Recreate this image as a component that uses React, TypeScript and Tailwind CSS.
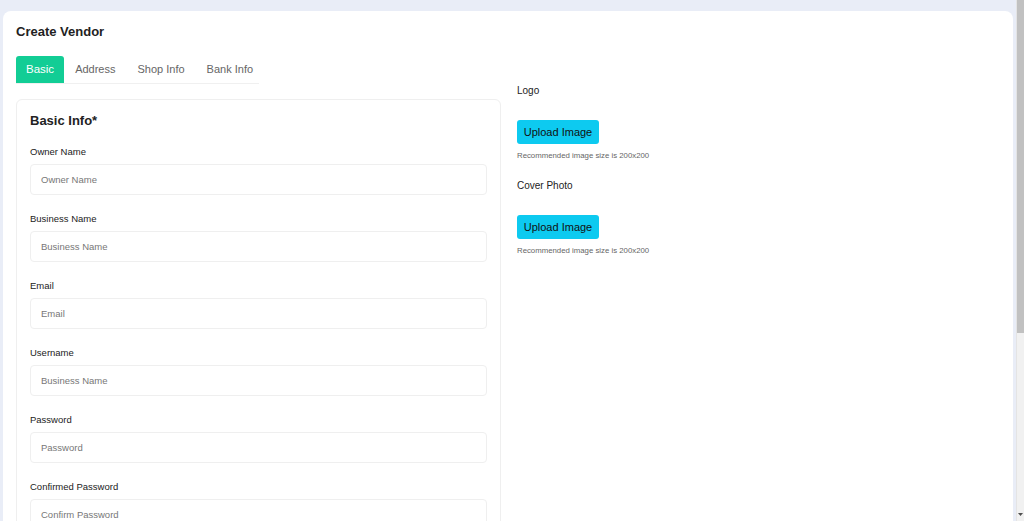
import * as React from "react";

const fields = [
  { label: "Owner Name", placeholder: "Owner Name" },
  { label: "Business Name", placeholder: "Business Name" },
  { label: "Email", placeholder: "Email" },
  { label: "Username", placeholder: "Business Name" },
  { label: "Password", placeholder: "Password" },
  { label: "Confirmed Password", placeholder: "Confirm Password" },
  { label: "Phone", placeholder: "Phone" },
];

const tabs = ["Basic", "Address", "Shop Info", "Bank Info"];

function ImageField({ label }: { label: string }) {
  return (
    <div className="flex flex-col">
      <span className="text-[10px] leading-[14px] text-[#222]">{label}</span>
      <button
        type="button"
        className="mt-[22px] h-6 w-[82px] whitespace-nowrap rounded-[3px] bg-[#0dcaf0] text-[11px] text-[#111]"
      >
        Upload Image
      </button>
      <span className="mt-[7px] whitespace-nowrap text-[7.8px] leading-[10px] text-[#666]">
        Recommended image size is 200x200
      </span>
    </div>
  );
}

export default function App() {
  const [active, setActive] = React.useState("Basic");

  return (
    <div
      className="flex h-[521px] overflow-hidden bg-[#e9edf7]"
      style={{ fontFamily: '"Liberation Sans", Arial, sans-serif' }}
    >
      <div className="min-w-0 flex-1">
        <div className="mx-[3px] mt-[11px] rounded-lg bg-white px-[13px] pb-8 pt-[13px]">
          <h1 className="text-[13px] font-bold leading-4 text-[#222]">Create Vendor</h1>

          <div className="mt-[16px] flex w-[243px] border-b border-[#f0f0f0]">
            {tabs.map((t) => (
              <button
                key={t}
                type="button"
                onClick={() => setActive(t)}
                className={
                  t === active
                    ? "h-[27px] whitespace-nowrap rounded-t-[3px] bg-[#12cd95] px-[10px] text-[11.5px] text-white"
                    : "h-[27px] whitespace-nowrap px-[11px] text-[11px] text-[#666]"
                }
              >
                {t}
              </button>
            ))}
          </div>

          <div className="mt-[15px] grid grid-cols-2 gap-4">
            <div className="mr-[-1px] rounded-md border border-[#efefef] px-[13px] pb-6 pt-[12px]">
              <h2 className="text-[13px] font-bold leading-[18px] text-[#222]">Basic Info*</h2>
              <div className="mt-[15px] flex flex-col gap-[17px]">
                {fields.map((f) => (
                  <label key={f.label} className="flex flex-col">
                    <span className="text-[9.5px] leading-[14px] text-[#222]">{f.label}</span>
                    <input
                      placeholder={f.placeholder}
                      className="mt-[5px] h-[31px] rounded-[4px] border border-[#efefef] px-[10px] text-[9.5px] outline-none placeholder:text-[#777]"
                    />
                  </label>
                ))}
              </div>
            </div>

            <div className="-mt-[15px] flex flex-col gap-[18px] pl-px">
              <ImageField label="Logo" />
              <ImageField label="Cover Photo" />
            </div>
          </div>
        </div>
      </div>

      {/* page scrollbar */}
      <div className="flex w-[8px] shrink-0 flex-col border-l border-[#e4e4e4] bg-[#f1f1f1]">
        <div className="h-[333px] bg-[#c1c1c1]" />
        <div className="flex flex-1 items-end justify-center pb-[5px]">
          <svg width="5" height="3" viewBox="0 0 5 3">
            <path d="M0 0h5L2.5 3z" fill="#505050" />
          </svg>
        </div>
      </div>
    </div>
  );
}
